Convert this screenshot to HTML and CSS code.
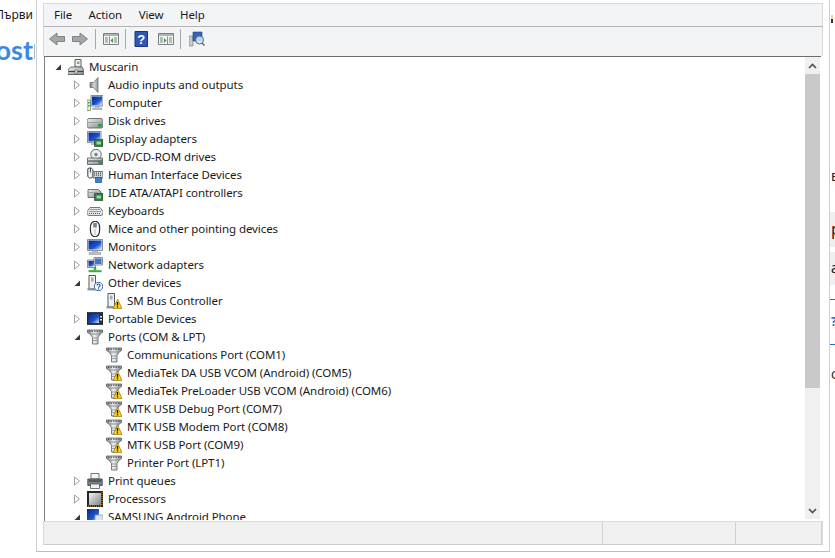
FILE: index.html
```html
<!DOCTYPE html>
<html lang="en">
<head>
<meta charset="utf-8">
<title>Device Manager</title>
<link rel="stylesheet" href="styles.css">
</head>
<body>
<svg class="defs" width="0" height="0" aria-hidden="true">
  <defs>
    <linearGradient id="steel" x1="0" y1="0" x2="1" y2="1"><stop offset="0" stop-color="#f2f2f2"/><stop offset="1" stop-color="#7f868a"/></linearGradient>
    <linearGradient id="speaker" x1="0" y1="0" x2="1" y2="0"><stop offset="0" stop-color="#6f7477"/><stop offset=".5" stop-color="#d6d9da"/><stop offset="1" stop-color="#8d9295"/></linearGradient>
    <linearGradient id="funnel" x1="0" y1="0" x2="1" y2="0"><stop offset="0" stop-color="#7d8387"/><stop offset=".45" stop-color="#eef0f1"/><stop offset="1" stop-color="#80868a"/></linearGradient>
    <linearGradient id="screen" x1="0" y1="0" x2="1" y2="1"><stop offset="0" stop-color="#08268f"/><stop offset=".6" stop-color="#1a55cc"/><stop offset="1" stop-color="#dfeafa"/></linearGradient>
    <symbol id="warn" viewBox="0 0 16 16"><path d="M11.700 6.300 16 15.600H7z" fill="#fbd21f" stroke="#8f6f08" stroke-width=".7"/><path d="M11.500 9v3.400M11.500 13.300v1.200" stroke="#111" stroke-width="1.300"/></symbol>
    <symbol id="host" viewBox="0 0 16 16"><path d="M7 .5h6v7.500H7z" fill="#eef1ee" stroke="#58605f"/><path d="M9 2.500h2.500v2.500H9z" fill="#86a883"/><path d="M2.500 8h11.500l2 3v4.500H0V11z" fill="url(#steel)" stroke="#4d5356" stroke-width=".8"/><path d="M.5 12.500h15" stroke="#3c4245" stroke-width="1.100"/><path d="M7 11h2.500v3.500H7z" fill="#d5d9da" stroke="#555" stroke-width=".5"/></symbol>
    <symbol id="audio" viewBox="0 0 16 16"><path d="M3 5.500h3.500L11 .5v15l-4.500-5H3z" fill="url(#speaker)" stroke="#6d7275" stroke-width=".8"/></symbol>
    <symbol id="computer" viewBox="0 0 16 16"><path d="M0 5h3.500v10.500H0z" fill="#e4e9d2" stroke="#6f7d5f" stroke-width=".7"/><path d="M1 7h1.500v1.500H1zM1 10h1.500v1.500H1z" fill="#36a13a"/><path d="M4 .5h12v10.500H4z" fill="#e4e7ec" stroke="#596068" stroke-width=".7"/><path d="M5 1.500h10v8.500H5z" fill="url(#screen)"/><path d="M8.500 11h3.500v2h3v1.500H5.500V13h3z" fill="#b8bdc3" stroke="#7f858b" stroke-width=".4"/></symbol>
    <symbol id="disk" viewBox="0 0 16 16"><path d="M2 5.500h12c1.500 0 2 1.500 2 3v4.500c0 1-1 2-2 2H2c-1 0-2-1-2-2V8.500c0-1.500.5-3 2-3z" fill="url(#steel)" stroke="#50575a" stroke-width=".8"/><path d="M.5 9.500h15" stroke="#9aa1a4"/><path d="M11 11h3.500v2.500H11z" fill="#2f9a3b"/></symbol>
    <symbol id="display" viewBox="0 0 16 16"><path d="M.5 .5h13.500v11H.5z" fill="#e4e7ec" stroke="#596068" stroke-width=".7"/><path d="M1.500 1.500h11.500v9H1.500z" fill="url(#screen)"/><path d="M4 11.500h5.500v2.500H4z" fill="#b8bdc3"/><path d="M7.500 8.500H16v7H7.500z" fill="#2f7f45" stroke="#1c4e29" stroke-width=".7"/><path d="M9.500 10.500h4.500v3H9.500z" fill="#a4d5a0"/></symbol>
    <symbol id="dvd" viewBox="0 0 16 16"><circle cx="9" cy="5.500" r="5.200" fill="#eceff1" stroke="#5f6669"/><circle cx="9" cy="5.500" r="1.700" fill="#7a8184"/><path d="M.5 9h15v6.500H.5z" fill="url(#steel)" stroke="#4d5356" stroke-width=".8"/><path d="M1 12h14" stroke="#3c4245"/><path d="M11.500 13h3.500v2h-3.500z" fill="#2f9a3b"/></symbol>
    <symbol id="hid" viewBox="0 0 16 16"><path d="M.8 1.800c2.700-2 5.200-.5 5.200 2.700v4.300c0 3-5.200 3-5.200 0z" fill="#f2f4f5" stroke="#33383b"/><path d="M3.400 1v4.500" stroke="#33383b"/><path d="M6 4.500h10v6.500H6z" fill="#cfd3d6" stroke="#4f555a" stroke-width=".8"/><path d="M7 6.200h8M7 8.200h8" stroke="#383e42" stroke-dasharray="1 1"/><path d="M8.500 10.500h6v5h-6z" fill="#3c82c9" stroke="#1f4e7e" stroke-width=".7"/></symbol>
    <symbol id="ide" viewBox="0 0 16 16"><path d="M1 4.500h10.500l2.500 2.500v5.500H1z" fill="url(#steel)" stroke="#4f555a" stroke-width=".8"/><path d="M2 7.500h9" stroke="#9aa1a4"/><path d="M7.500 8.500H16v7H7.500z" fill="#2f7f45" stroke="#1c4e29" stroke-width=".7"/><path d="M9.500 10.500h4.500v3H9.500z" fill="#a4d5a0"/></symbol>
    <symbol id="keyboard" viewBox="0 0 16 16"><path d="M3 4.500h10l3 4v3l-2 1H2l-2-1v-3z" fill="#e1e4e6" stroke="#555b5f" stroke-width=".8"/><path d="M3.500 6.500h9M2.500 8.500h11M2 10.500h12" stroke="#555b5f" stroke-dasharray="1 1"/></symbol>
    <symbol id="mouse" viewBox="0 0 16 16"><path d="M8 .3c3 0 4.700 2.500 4.700 7.200s-1 8.200-4.700 8.200-4.700-3.500-4.700-8.200S5 .3 8 .3z" fill="#f5f6f7" stroke="#22262a" stroke-width="1.100"/><path d="M6.200 2h3.600v4.500H6.200z" fill="#7d8387"/><path d="M8 8v6" stroke="#b5b9bc"/></symbol>
    <symbol id="monitor" viewBox="0 0 16 16"><path d="M.5 .5h15v11H.5z" fill="#e4e7ec" stroke="#596068" stroke-width=".7"/><path d="M1.500 1.500h13v9h-13z" fill="url(#screen)"/><path d="M5.500 11.500h5v2h3.500v2H2v-2h3.500z" fill="#b8bdc3" stroke="#7f858b" stroke-width=".4"/></symbol>
    <symbol id="network" viewBox="0 0 16 16"><path d="M.5 3h8v7.500h-8z" fill="#e4e7ec" stroke="#596068" stroke-width=".7"/><path d="M1.500 4h6v5.500h-6z" fill="url(#screen)"/><path d="M7 .5h8.500v7.500H7z" fill="#e4e7ec" stroke="#596068" stroke-width=".7"/><path d="M8 1.500h6.500V7H8z" fill="#3f78c9"/><path d="M6.800 10h2.400v3.500H6.800z" fill="#2fae38"/><path d="M1.500 13.200h13v2H1.500z" fill="#2fae38"/></symbol>
    <symbol id="other" viewBox="0 0 16 16"><path d="M2 .5h6.500v13H2z" fill="#f0f2f2" stroke="#555b5d"/><path d="M4 2.500h2.500v4H4z" fill="#a6acae"/><path d="M.5 13h9.500v2.500H.5z" fill="#8e9598"/><circle cx="11.500" cy="11.500" r="4.200" fill="#fff" stroke="#2f6db5"/><path d="M10 10.500c0-2 3-2 3 0 0 1.200-1.500 1-1.500 2.300M11.500 13.300v1.200" fill="none" stroke="#1f4f90" stroke-width="1.100"/></symbol>
    <symbol id="sm" viewBox="0 0 16 16"><path d="M2 .5h6.500v13H2z" fill="#f0f2f2" stroke="#555b5d"/><path d="M4 2.500h2.500v4H4z" fill="#a6acae"/><path d="M.5 13h9.500v2.500H.5z" fill="#8e9598"/></symbol>
    <symbol id="portable" viewBox="0 0 16 16"><path d="M0 1.500h16v12H0z" fill="#2c3137" stroke="#14171a" stroke-width=".7"/><path d="M1.500 3h10.500v9H1.500z" fill="url(#screen)"/><path d="M13 5h2v1.500h-2zM13 8h2v1.500h-2z" fill="#e2e5e8"/></symbol>
    <symbol id="port" viewBox="0 0 16 16"><path d="M.5 1h15v2.500l-2.300 1.500-2.200 3.500v6.500H5.500V8.500L3 5 .5 3.500z" fill="url(#funnel)" stroke="#5a6064" stroke-width=".8"/><path d="M2 2.200h12" stroke="#3f4549" stroke-dasharray="1.500 1"/><path d="M3 5h10" stroke="#8b9195"/><path d="M5.500 9h5M5.500 11.500h5" stroke="#8b9195" stroke-width=".8"/></symbol>
    <symbol id="printer" viewBox="0 0 16 16"><path d="M4 .5h8v5.500H4z" fill="#f8f8f8" stroke="#4f555a" stroke-width=".8"/><path d="M.8 6h14.400v6.500H.8z" fill="#7d8388" stroke="#33383c" stroke-width=".8"/><path d="M2 8h12" stroke="#2c3135"/><path d="M3.500 11h9v4.500h-9z" fill="#f1f3f4" stroke="#4f555a" stroke-width=".8"/></symbol>
    <symbol id="cpu" viewBox="0 0 16 16"><path d="M0 0h16v16H0z" fill="#26251f"/><path d="M2 2h12v12H2z" fill="url(#steel)"/><path d="M15 1v14M1 15h14" stroke="#c9a24a" stroke-dasharray="1 1"/></symbol>
    <symbol id="phone" viewBox="0 0 16 16"><path d="M0 0h12v12H0z" fill="url(#screen)"/><path d="M8 6h8v8H8z" fill="#dfe3e8" stroke="#7d858b" stroke-width=".6"/></symbol>
    <symbol id="closed" viewBox="0 0 8 10"><path d="M1.500 1v8L6.500 5z" fill="#fff" stroke="#a0a0a0"/></symbol>
    <symbol id="open" viewBox="0 0 8 10"><path d="M7 2.500V8H1.500z" fill="#383838"/></symbol>
  </defs>
</svg>

<aside class="strip-left">
  <div class="tab-text">Първи</div>
  <div class="logo">ost<span class="logo-bar"></span></div>
</aside>

<main class="window">
  <nav class="menu">
    <span>File</span><span>Action</span><span>View</span><span>Help</span>
  </nav>
  <div class="toolbar">
    <svg class="tool" viewBox="0 0 16 16"><path d="M.5 8 8 2v3.500h7.500v5H8V14z" fill="#a3a7a5" stroke="#7d817f"/></svg>
    <svg class="tool t-next" viewBox="0 0 16 16"><path d="M15.500 8 8 2v3.500H.5v5H8V14z" fill="#a3a7a5" stroke="#7d817f"/></svg>
    <i class="tsep"></i>
    <svg class="tool t-a" viewBox="0 0 16 16"><path d="M.5 2.500h15v11H.5z" fill="#f4f4f0" stroke="#7b8083"/><path d="M1 3h14v2H1z" fill="#aeb4b8"/><path d="M6.500 5.500v8" stroke="#8b9093"/><path d="M2 7h3M2 9h3M2 11h3M11 7h3M11 9h3M11 11h3" stroke="#7b8083"/><path d="M10 7v5L7.500 9.500z" fill="#3a9a45"/></svg>
    <i class="tsep t-s2"></i>
    <svg class="tool t-help" viewBox="0 0 14 16"><path d="M1 .500h12.500v15H1z" fill="#2d57b8" stroke="#1a3580"/><text x="7.300" y="12.500" class="qm">?</text></svg>
    <svg class="tool t-b" viewBox="0 0 16 16"><path d="M.5 2.500h15v11H.5z" fill="#f4f4f0" stroke="#7b8083"/><path d="M1 3h14v2H1z" fill="#aeb4b8"/><path d="M9.500 5.500v8" stroke="#8b9093"/><path d="M2 7h3M2 9h3M2 11h3M11 7h3M11 9h3M11 11h3" stroke="#7b8083"/><path d="M6 7v5l2.500-2.500z" fill="#3a9a45"/></svg>
    <i class="tsep t-s3"></i>
    <svg class="tool t-c" viewBox="0 0 16 16"><path d="M0 5h4v10H0z" fill="#c6cbce" stroke="#6e7478" stroke-width=".6"/><path d="M4 1h9v9H4z" fill="#3564bf" stroke="#2c3f75" stroke-width=".6"/><circle cx="10.500" cy="9" r="4" fill="#d8e8f8" fill-opacity=".85" stroke="#4a6a9a"/><path d="M13 12l2.500 2.500" stroke="#5b6d80" stroke-width="1.500"/></svg>
  </div>

  <section class="content">
    <div class="tree">
      <div class="row l0"><svg class="tw"><use href="#open"/></svg><svg class="ico"><use href="#host"/></svg><span>Muscarin</span></div>
      <div class="row l1"><svg class="tw"><use href="#closed"/></svg><svg class="ico"><use href="#audio"/></svg><span>Audio inputs and outputs</span></div>
      <div class="row l1"><svg class="tw"><use href="#closed"/></svg><svg class="ico"><use href="#computer"/></svg><span>Computer</span></div>
      <div class="row l1"><svg class="tw"><use href="#closed"/></svg><svg class="ico"><use href="#disk"/></svg><span>Disk drives</span></div>
      <div class="row l1"><svg class="tw"><use href="#closed"/></svg><svg class="ico"><use href="#display"/></svg><span>Display adapters</span></div>
      <div class="row l1"><svg class="tw"><use href="#closed"/></svg><svg class="ico"><use href="#dvd"/></svg><span>DVD/CD-ROM drives</span></div>
      <div class="row l1"><svg class="tw"><use href="#closed"/></svg><svg class="ico"><use href="#hid"/></svg><span>Human Interface Devices</span></div>
      <div class="row l1"><svg class="tw"><use href="#closed"/></svg><svg class="ico"><use href="#ide"/></svg><span>IDE ATA/ATAPI controllers</span></div>
      <div class="row l1"><svg class="tw"><use href="#closed"/></svg><svg class="ico"><use href="#keyboard"/></svg><span>Keyboards</span></div>
      <div class="row l1"><svg class="tw"><use href="#closed"/></svg><svg class="ico"><use href="#mouse"/></svg><span>Mice and other pointing devices</span></div>
      <div class="row l1"><svg class="tw"><use href="#closed"/></svg><svg class="ico"><use href="#monitor"/></svg><span>Monitors</span></div>
      <div class="row l1"><svg class="tw"><use href="#closed"/></svg><svg class="ico"><use href="#network"/></svg><span>Network adapters</span></div>
      <div class="row l1"><svg class="tw"><use href="#open"/></svg><svg class="ico"><use href="#other"/></svg><span>Other devices</span></div>
      <div class="row l2"><svg class="ico"><use href="#sm"/><use href="#warn"/></svg><span>SM Bus Controller</span></div>
      <div class="row l1"><svg class="tw"><use href="#closed"/></svg><svg class="ico"><use href="#portable"/></svg><span>Portable Devices</span></div>
      <div class="row l1"><svg class="tw"><use href="#open"/></svg><svg class="ico"><use href="#port"/></svg><span>Ports (COM &amp; LPT)</span></div>
      <div class="row l2"><svg class="ico"><use href="#port"/></svg><span>Communications Port (COM1)</span></div>
      <div class="row l2"><svg class="ico"><use href="#port"/><use href="#warn"/></svg><span>MediaTek DA USB VCOM (Android) (COM5)</span></div>
      <div class="row l2"><svg class="ico"><use href="#port"/><use href="#warn"/></svg><span>MediaTek PreLoader USB VCOM (Android) (COM6)</span></div>
      <div class="row l2"><svg class="ico"><use href="#port"/><use href="#warn"/></svg><span>MTK USB Debug Port (COM7)</span></div>
      <div class="row l2"><svg class="ico"><use href="#port"/><use href="#warn"/></svg><span>MTK USB Modem Port (COM8)</span></div>
      <div class="row l2"><svg class="ico"><use href="#port"/><use href="#warn"/></svg><span>MTK USB Port (COM9)</span></div>
      <div class="row l2"><svg class="ico"><use href="#port"/></svg><span>Printer Port (LPT1)</span></div>
      <div class="row l1"><svg class="tw"><use href="#closed"/></svg><svg class="ico"><use href="#printer"/></svg><span>Print queues</span></div>
      <div class="row l1"><svg class="tw"><use href="#closed"/></svg><svg class="ico"><use href="#cpu"/></svg><span>Processors</span></div>
      <div class="row l1"><svg class="tw"><use href="#open"/></svg><svg class="ico"><use href="#phone"/></svg><span>SAMSUNG Android Phone</span></div>
    </div>
    <div class="scrollbar">
      <div class="sb-btn"><svg class="chev" viewBox="0 0 9 6"><path d="M1 5l3.500-3.500L8 5" fill="none" stroke="#505050" stroke-width="1.600"/></svg></div>
      <div class="sb-thumb"></div>
      <div class="sb-track"></div>
      <div class="sb-btn"><svg class="chev" viewBox="0 0 9 6"><path d="M1 1l3.500 3.500L8 1" fill="none" stroke="#505050" stroke-width="1.600"/></svg></div>
    </div>
  </section>

  <footer class="status">
    <div class="cell c1"></div><div class="cell c2"></div><div class="cell c3"></div>
  </footer>
</main>

<aside class="strip-right">
  <div class="r-flag"></div>
  <div class="r-letter r-b">в</div>
  <div class="r-band r-p">р</div>
  <div class="r-band r-a">а</div>
  <div class="r-link">?</div>
  <div class="r-letter r-c">с</div>
</aside>
</body>
</html>
```

FILE: styles.css
```css
* { box-sizing: border-box; }
html, body { margin: 0; height: 100%; }
body {
  display: flex;
  width: 835px;
  height: 558px;
  overflow: hidden;
  background: #fff;
  font-family: "Noto Sans", "Open Sans", sans-serif;
  font-size: 11.5px;
  letter-spacing: -0.08px;
  color: #1a1a1a;
}
.defs { position: absolute; }

.strip-left {
  width: 36px;
  flex: none;
  overflow: hidden;
}
.tab-text {
  display: flex;
  justify-content: flex-end;
  padding: 7px 3px 0 0;
  height: 30px;
  font-size: 12px;
  letter-spacing: 0;
  line-height: 16px;
  white-space: nowrap;
}
.logo {
  display: flex;
  justify-content: flex-end;
  align-items: center;
  height: 24px;
  margin-top: 8px;
  font-family: "Lato", sans-serif;
  font-size: 27px;
  font-weight: 700;
  line-height: 24px;
  letter-spacing: 0;
  color: #3a8ae4;
  white-space: nowrap;
}
.logo-bar { width: 1px; height: 15px; flex: none; margin: 2px 1px 0 1px; background: #b5b5b5; }

.window {
  width: 794px;
  height: 552px;
  flex: none;
  padding: 3px 6px 6px 6px;
  display: flex;
  flex-direction: column;
  background: #fff;
  border-left: 1px solid #cfcfcf;
  border-right: 1px solid #cfcfcf;
  border-bottom: 1px solid #bdbdbd;
}

.menu {
  height: 24px;
  flex: none;
  display: flex;
  align-items: center;
  gap: 16.5px;
  padding: 0 0 2px 10px;
  background: #f3f4f6;
  border: 1px solid #d9d9d9;
  border-bottom: 1px solid #b4b4b4;
}
.toolbar {
  height: 29px;
  flex: none;
  display: flex;
  align-items: flex-start;
  padding: 4px 0 0 5px;
  background: #f3f4f6;
  border-left: 1px solid #d9d9d9;
  border-right: 1px solid #d9d9d9;
}
.tool { width: 16px; height: 16px; flex: none; }
.t-next { margin-left: 7px; }
.tsep { width: 1px; height: 20px; flex: none; margin: -2px 0 0 7px; background: #a9a9a9; }
.t-a { margin-left: 7px; }
.t-s2 { margin-left: 6px; }
.t-help { margin-left: 8px; width: 14px; }
.t-b { margin-left: 10px; }
.t-s3 { margin-left: 6px; }
.t-c { margin-left: 8px; }
.qm { font-family: "Liberation Sans", sans-serif; font-size: 13px; font-weight: 700; fill: #fff; text-anchor: middle; }

.content {
  height: 465px;
  flex: none;
  display: flex;
  margin: 0 2px 0 1px;
  background: #fff;
  border-top: 1px solid #6e6e6e;
  border-left: 1px solid #808080;
  overflow: hidden;
}
.tree { flex: 1; min-width: 0; padding-top: 1px; margin-bottom: 1px; overflow: hidden; }
.row {
  display: flex;
  align-items: center;
  height: 18px;
  white-space: nowrap;
}
.row span { line-height: 18px; }
.l0 { padding-left: 9px; }
.l1 { padding-left: 28px; }
.l2 { padding-left: 61px; }
.tw { width: 8px; height: 10px; flex: none; margin-right: 6px; }
.ico { width: 16px; height: 16px; flex: none; margin-right: 5px; }

.scrollbar {
  width: 15px;
  flex: none;
  display: flex;
  flex-direction: column;
  margin-right: 1px;
  margin-bottom: 2px;
  background: #f0f0f0;
}
.sb-btn { height: 17px; flex: none; display: flex; align-items: center; justify-content: center; }
.chev { width: 9px; height: 6px; }
.sb-thumb { height: 314px; flex: none; background: #c9c9c9; }
.sb-track { flex: 1; }

.status {
  height: 24px;
  flex: none;
  display: flex;
  background: #f0f0f0;
  border: 1px solid #d9d9d9;
  border-top: 1px solid #dadada;
  border-bottom: 1px solid #cdcdcd;
}
.cell { border-right: 1px solid #d2d2d2; }
.c1 { width: 559px; }
.c2 { width: 133px; }
.c3 { width: 86px; }

.strip-right {
  width: 5px;
  flex: none;
  display: flex;
  flex-direction: column;
  overflow: hidden;
  letter-spacing: 0;
  color: #222;
}
.r-flag { height: 8px; margin-top: 15px; margin-left: 1px; background: linear-gradient(#f6d28a 50%, #333 50%); width: 2px; }
.r-letter { font-size: 14px; line-height: 16px; white-space: nowrap; padding-left: 1px; }
.r-b { margin-top: 145px; }
.r-band {
  background: #efefef;
  font-size: 16px;
  padding-left: 1px;
}
.r-p { height: 35px; margin-top: 28px; line-height: 34px; }
.r-a { height: 33px; margin-top: 5px; line-height: 32px; font-size: 14px; }
.r-link {
  height: 46px;
  margin-top: 14px;
  padding-left: 1px;
  border-top: 1px solid #2d6cc0;
  border-bottom: 1px solid #2d6cc0;
  color: #2d6cc0;
  line-height: 44px;
  font-weight: 700;
}
.r-c { margin-top: 21px; color: #333; }
```
